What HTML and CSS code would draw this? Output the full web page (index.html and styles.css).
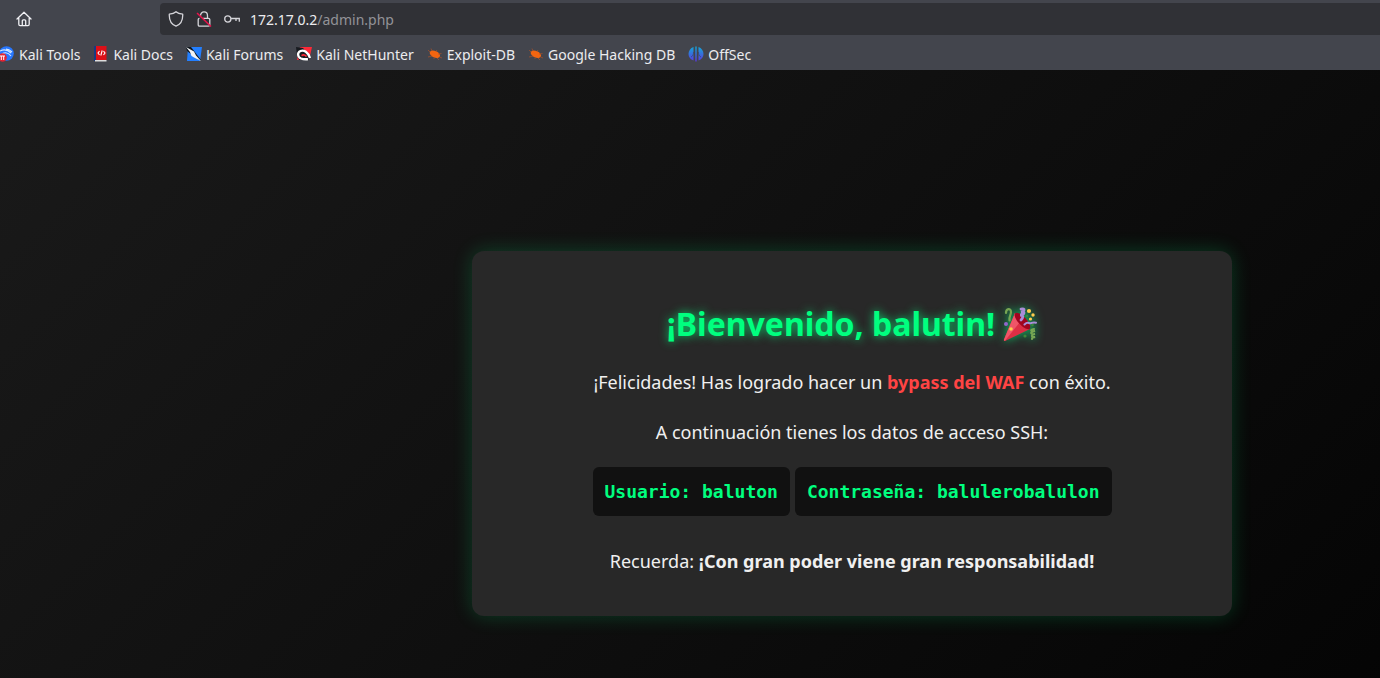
FILE: index.html
```html
<!DOCTYPE html>
<html lang="es">
<head>
<meta charset="utf-8">
<title>Admin</title>
<link rel="stylesheet" href="styles.css">
</head>
<body>
<header class="browser">
  <div class="toolbar">
    <button class="home" aria-label="Home">
      <svg width="16" height="16" viewBox="0 0 16 16" fill="none" stroke="#f0f0f4" stroke-width="1.3" stroke-linejoin="round" stroke-linecap="round"><path d="M1 8 8 1.2 15 8M2.800 7v6.300c0 .8.5 1.300 1.300 1.300h7.800c.8 0 1.300-.5 1.300-1.300V7M6.300 14.500V9.800c0-.6.4-1 1-1h1.400c.6 0 1 .4 1 1v4.700"/></svg>
    </button>
    <div class="address">
      <svg width="16" height="16" viewBox="0 0 16 16" fill="none" stroke="#d5d5da" stroke-width="1.3" stroke-linejoin="round"><path d="M8 .8C6.500 2.200 3.800 3 1.300 3.200c-.3 6 1.900 10.300 6.700 12 4.800-1.700 7-6 6.700-12C12.200 3 9.500 2.200 8 .8z"/></svg>
      <svg width="16" height="16" viewBox="0 0 16 16" fill="none" stroke="#d5d5da" stroke-width="1.3"><path d="M4.500 4.800C4.500 2.400 6 .9 8 .9s3.500 1.500 3.500 3.800V7M7 7.300h5.500c.8 0 1.300.5 1.300 1.300v5.200c0 .8-.5 1.300-1.300 1.300h-9c-.8 0-1.300-.5-1.300-1.300V8.600c0-.8.5-1.300 1.300-1.300"/><path d="M1 2 15 15.500" stroke="#e8134b" stroke-width="1.5"/></svg>
      <svg width="16" height="16" viewBox="0 0 16 16" fill="none" stroke="#d5d5da" stroke-width="1.3"><circle cx="3.800" cy="8" r="3.100"/><path d="M7 7.500h8.300v3.200M12 7.500v2.500"/></svg>
      <span class="url">172.17.0.2<span class="path">/admin.php</span></span>
    </div>
  </div>
  <nav class="bookmarks">
    <a href="#"><svg width="15" height="16" viewBox="1 0 15 16"><circle cx="7.500" cy="7.500" r="7.300" fill="#2777ff"/><path d="M1 5c4-2 8-1 11 2M3 8c3-2 6-2 9 2M7 3c3 0 5 2 6 3" fill="none" stroke="#d5e7ff" stroke-width="1.1"/><circle cx="3.500" cy="11.500" r="4.300" fill="#e22332"/><path d="M1 10h5M2.300 10v4M4.700 10v4" stroke="#fff" fill="none"/></svg>Kali Tools</a>
    <a href="#"><svg width="16" height="16" viewBox="0 0 16 16"><path d="M1 0h2v15H1z" fill="#173a83"/><path d="M3 0h10.500v14H3z" fill="#dc1018"/><path d="M2 14h11.500v1.500H2z" fill="#ddd"/><path d="M6.500 5 5 7l1.500 2M10.500 5 12 7l-1.500 2M9.200 4.500 7.800 9.500" fill="none" stroke="#fff" stroke-width="1.1"/></svg>Kali Docs</a>
    <a href="#"><svg width="16" height="16" viewBox="0 0 16 16"><path d="M2 1h14l-2 14H1z" fill="#237fff"/><path d="M0 1h5l10 13h-2L1 5z" fill="#111820"/><path d="M0 1 8 5.500l2 4 5 5.500-6-3-3.500-2L4 6z" fill="#f5f5f5"/></svg>Kali Forums</a>
    <a href="#"><svg width="16" height="16" viewBox="0 0 16 16"><path d="M4 1h12l-3 13H1z" fill="#ff2938"/><path d="M0 1 7 2l7 8-1 4H3L1 9z" fill="#181b20"/><path d="M14 12C12 6 8 3.500 4.500 5 1 6.500 1.500 11 5 12.500c3 1.200 5.500.6 7 .8" fill="none" stroke="#fff" stroke-width="2.300"/><path d="M5.500 9.700c2-1.500 4-.8 5 1" stroke="#ff2938" stroke-width="1.600" fill="none"/></svg>Kali NetHunter</a>
    <a href="#"><svg width="16" height="16" viewBox="0 0 16 16"><ellipse cx="8" cy="8.300" rx="5.500" ry="3.200" transform="rotate(25 8 8)" fill="#f36510"/><path d="m3 6-2-2m4 1L4 2.500m5 3 1-1.500m1 4 3.500-.5m-2 3.500 2.500 1m-5 0 2 2m-5-2v1m-2-3-4 1" stroke="#a95029" stroke-width=".7"/></svg>Exploit-DB</a>
    <a href="#"><svg width="16" height="16" viewBox="0 0 16 16"><ellipse cx="8" cy="8.300" rx="5.500" ry="3.200" transform="rotate(25 8 8)" fill="#f36510"/><path d="m3 6-2-2m4 1L4 2.500m5 3 1-1.500m1 4 3.500-.5m-2 3.500 2.500 1m-5 0 2 2m-5-2v1m-2-3-4 1" stroke="#a95029" stroke-width=".7"/></svg>Google Hacking DB</a>
    <a href="#"><svg width="16" height="16" viewBox="0 0 16 16"><defs><linearGradient id="offsec" x2="0" y2="1"><stop stop-color="#12a8d8"/><stop offset="1" stop-color="#5a38e0"/></linearGradient></defs><path d="M5.500 1v13.500C2.500 13.500.5 11 .5 8S2.500 2 5.500 1zM10.500 1v13.500c3-1 5-3.500 5-6.500s-2-6-5-7zM7.300.5h1.400v15H7.300z" fill="url(#offsec)"/><path d="M3 11c2-1 2.500-2.500 2.500-5M13 11c-2-1-2.500-2.500-2.500-5" stroke="#394070" fill="none" stroke-width=".7"/></svg>OffSec</a>
  </nav>
</header>
<main class="page">
  <section class="card">
    <h1>¡Bienvenido, balutin! <svg class="party" role="img" aria-label="Fiesta" viewBox="0 0 34 34"><path d="M12 6 1 32.500c-.5 1.200.5 1.700 1.500 1.200L27 22z" fill="#dd2e44"/><path d="M12 6 1 32.500c-.4 1 .2 1.500 1 1.300L17 15z" fill="#ef5568"/><ellipse cx="19.500" cy="14" rx="4.200" ry="10.700" transform="rotate(-43 19.500 14)" fill="#a0041e"/><path d="M3 6c0-5 5-5 5-1 0 3-2 4-1.500 8.500" fill="none" stroke="#77a653" stroke-width="2.200" stroke-linecap="round"/><path d="M18 2c5-1 3 3 0 3 5-1 3 3-1 3 4 0 3 3 1 5" fill="none" stroke="#aa8dd8" stroke-width="2.800" stroke-linecap="round"/><path d="M21.500 17.500c4-4 4 0 7-1.500 2-1 3-.7 4.500-.3" fill="none" stroke="#aa8dd8" stroke-width="2" stroke-linecap="round"/><path d="M31 22c-5 1-2 3 1 2-6 1-4 4 0 3-5 1-3 4 0 3-3 0-3 1-3 2" fill="none" stroke="#77a653" stroke-width="2.200" stroke-linecap="round"/><g fill="#ffcc4d"><circle cx="26" cy="4" r="2.100"/><circle cx="30" cy="8" r="1.700"/><circle cx="27.500" cy="12" r="1.600"/><circle cx="8" cy="22" r="1.800"/></g><circle cx="3" cy="17" r="2" fill="#9266cc"/><g fill="#3b8838"><circle cx="24" cy="9" r="1.300"/><circle cx="29.500" cy="18" r="1.300"/><circle cx="22" cy="29" r="1.600"/></g></svg></h1>
    <p>¡Felicidades! Has logrado hacer un <span class="highlight">bypass del WAF</span> con éxito.</p>
    <p>A continuación tienes los datos de acceso SSH:</p>
    <div class="credentials"><code>Usuario: baluton</code> <code>Contraseña: balulerobalulon</code></div>
    <p>Recuerda: <strong>¡Con gran poder viene gran responsabilidad!</strong></p>
  </section>
</main>
</body>
</html>
```
FILE: styles.css
```css
* { box-sizing: border-box; }
body {
  margin: 0;
  min-height: 100vh;
  display: flex;
  flex-direction: column;
  background: #000;
  color: #f0f0f0;
  font-family: "Noto Sans", sans-serif;
}
svg { flex: none; }
.browser {
  height: 70px;
  background: #43454d;
  color: #ececef;
  overflow: hidden;
}
.toolbar {
  display: flex;
  align-items: center;
  height: 38px;
}
.home {
  display: flex;
  margin: 0 128px 0 16px;
  padding: 0;
  border: 0;
  background: none;
}
.address {
  flex: 1;
  display: flex;
  align-items: center;
  gap: 12px;
  height: 32px;
  padding-left: 8px;
  border-radius: 4px 0 0 4px;
  background: #303136;
}
.url { margin-left: -2px; font-size: 14px; }
.path { color: #939398; }
.bookmarks {
  display: flex;
  align-items: center;
  gap: 13px;
  height: 32px;
  font-size: 14px;
  white-space: nowrap;
}
.bookmarks a {
  display: flex;
  align-items: center;
  gap: 4px;
  color: inherit;
  text-decoration: none;
}
.page {
  flex: 1;
  display: flex;
  justify-content: center;
  align-items: flex-start;
  padding: 181px 0 61px 324px;
  background: linear-gradient(135deg, #1a1a1a, #000 122%);
}
.card {
  width: 760px;
  max-width: 100%;
  padding: 48px 40px 40px;
  border-radius: 12px;
  background: #282828;
  box-shadow: 0 0 20px rgba(0, 255, 127, 0.2);
  text-align: center;
  font-size: 18px;
}
h1 {
  margin: 0 0 18px;
  color: #00ff7f;
  font-size: 32px;
  line-height: 50px;
  text-shadow: 0 0 10px rgba(0, 255, 127, 0.8);
}
.party {
  width: 34px;
  height: 34px;
  vertical-align: -5px;
  filter: drop-shadow(0 0 5px rgba(0, 255, 127, 0.7));
}
p { margin: 0 0 20px; line-height: 30px; }
.highlight { color: #ff4444; font-weight: bold; }
.credentials {
  display: flex;
  flex-wrap: wrap;
  justify-content: center;
  gap: 5px;
  margin-bottom: 30px;
}
code {
  padding: 10px 12px;
  border-radius: 6px;
  background: #111;
  color: #00ff7f;
  font: bold 18px/29px "DejaVu Sans Mono", monospace;
}
.card p:last-child { margin: 0; }
```
